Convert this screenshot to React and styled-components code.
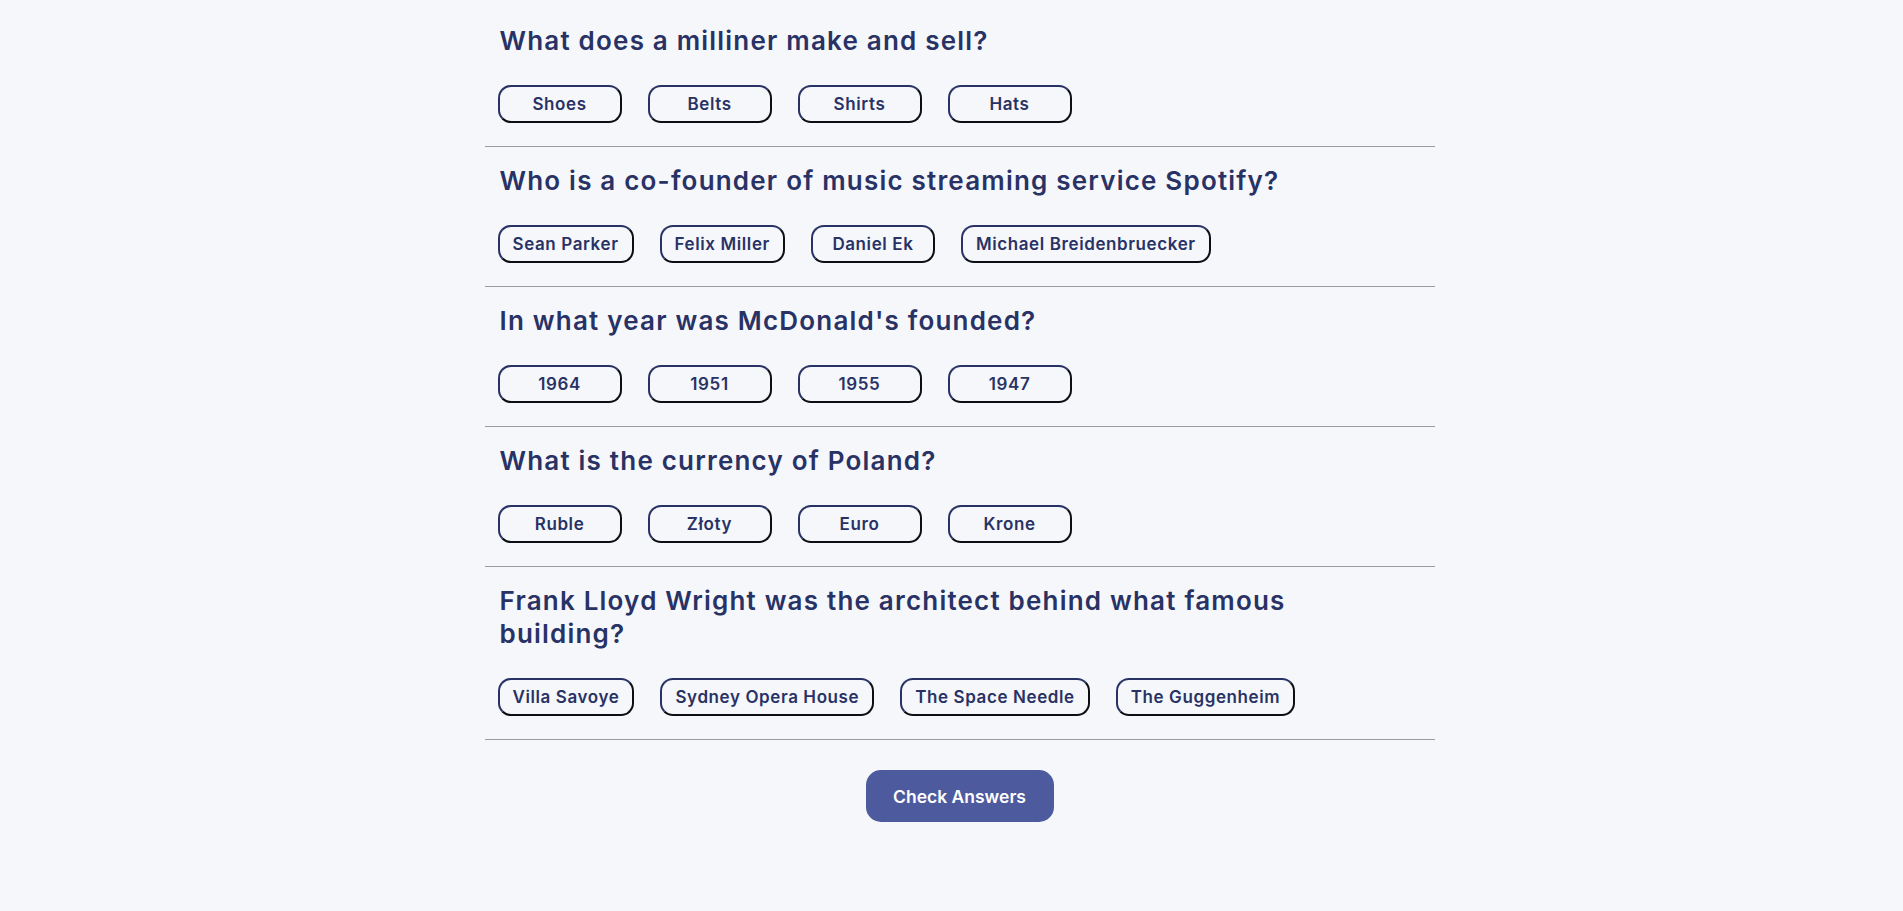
import React from "react";
import styled, { createGlobalStyle } from "styled-components";

const GlobalStyle = createGlobalStyle`
  html, body {
    margin: 0;
    padding: 0;
    background: #F5F7FB;
  }
  body {
    font-family: Inter, "Liberation Sans", sans-serif;
    color: #293264;
  }
`;

const Page = styled.div`
  display: flex;
  justify-content: center;
  padding-left: 16px;
  padding-top: 7px;
  min-height: 904px;
  box-sizing: border-box;
`;

const Quiz = styled.main`
  width: 950px;
  display: flex;
  flex-direction: column;
  align-items: stretch;
`;

const Question = styled.section`
  padding: 17px 13px 23px;
  border-bottom: 1px solid #9c9c9c;
`;

const Title = styled.h2`
  margin: 0 0 28px 2px;
  max-width: 880px;
  font-family: Inter, "Liberation Sans", sans-serif;
  font-weight: 600;
  font-size: 26px;
  line-height: 33px;
  letter-spacing: 1.2px;
  color: #293264;
`;

const Answers = styled.div`
  display: flex;
  gap: 26px;
`;

const Answer = styled.button`
  min-width: 124px;
  height: 38px;
  padding: 0 13px;
  border: 2px solid;
  border-color: #293264 #0d0d14 #0d0d14 #293264;
  border-radius: 13px;
  background: transparent;
  font-family: Inter, "Liberation Sans", sans-serif;
  font-weight: 600;
  font-size: 17px;
  letter-spacing: 0.6px;
  color: #293264;
  cursor: pointer;
`;

const Footer = styled.div`
  display: flex;
  justify-content: center;
  padding-top: 30px;
`;

const CheckButton = styled.button`
  width: 188px;
  height: 52px;
  border: none;
  border-radius: 15px;
  background: #4D5B9E;
  color: #fff;
  font-family: Inter, "Liberation Sans", sans-serif;
  font-weight: 600;
  font-size: 17.5px;
  cursor: pointer;
`;

const questions = [
  { q: "What does a milliner make and sell?", a: ["Shoes", "Belts", "Shirts", "Hats"] },
  { q: "Who is a co-founder of music streaming service Spotify?", a: ["Sean Parker", "Felix Miller", "Daniel Ek", "Michael Breidenbruecker"] },
  { q: "In what year was McDonald's founded?", a: ["1964", "1951", "1955", "1947"] },
  { q: "What is the currency of Poland?", a: ["Ruble", "Złoty", "Euro", "Krone"] },
  { q: "Frank Lloyd Wright was the architect behind what famous building?", a: ["Villa Savoye", "Sydney Opera House", "The Space Needle", "The Guggenheim"] },
];

export default function App() {
  return (
    <>
      <GlobalStyle />
      <Page>
        <Quiz>
          {questions.map((item) => (
            <Question key={item.q}>
              <Title>{item.q}</Title>
              <Answers>
                {item.a.map((ans) => (
                  <Answer key={ans}>{ans}</Answer>
                ))}
              </Answers>
            </Question>
          ))}
          <Footer>
            <CheckButton>Check Answers</CheckButton>
          </Footer>
        </Quiz>
      </Page>
    </>
  );
}
